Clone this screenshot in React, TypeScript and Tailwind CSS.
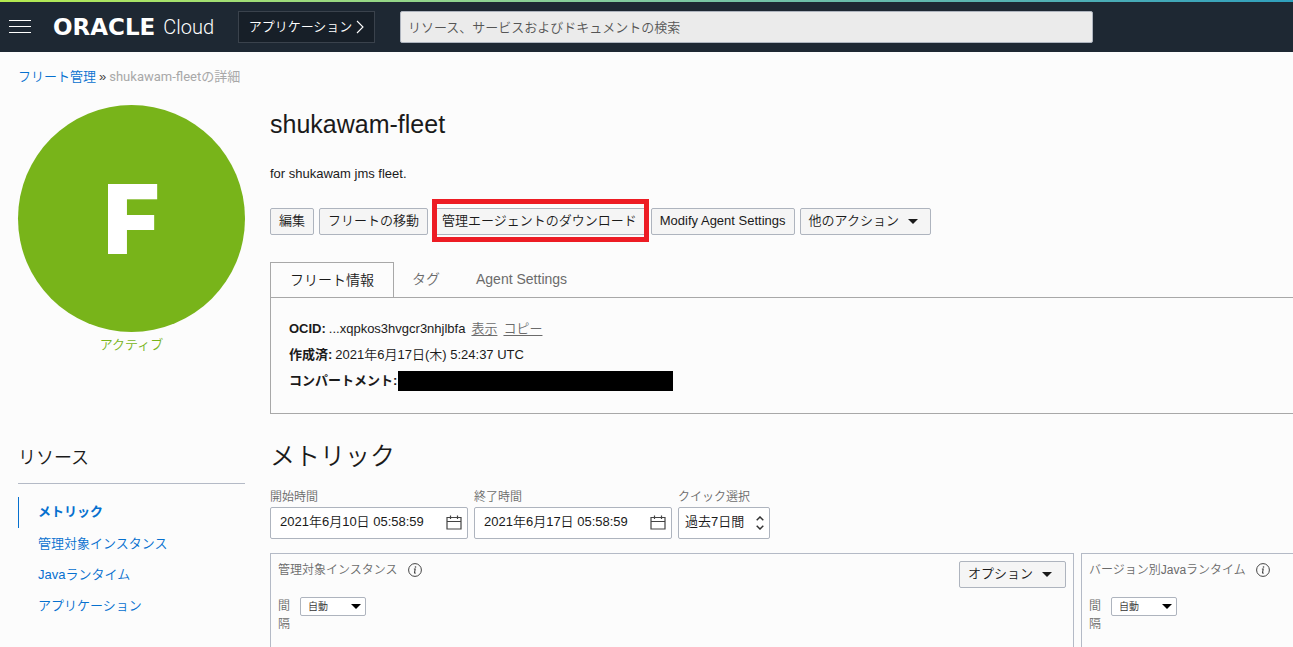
import type { ReactNode } from "react";

function Caret({ className = "" }: { className?: string }) {
  return (
    <svg viewBox="0 0 10 5" className={`h-[5px] w-[10px] ${className}`} aria-hidden="true">
      <path d="M0 0h10L5 5z" fill="currentColor" />
    </svg>
  );
}

function InfoIcon() {
  return (
    <svg viewBox="0 0 14 14" className="size-[14px] text-[#444]" fill="none" stroke="currentColor" aria-hidden="true">
      <circle cx="7" cy="7" r="6.400" strokeWidth="1" />
      <path d="M5.900 6h1.300L6.500 9.600q-.1.800 1.200.4" strokeWidth="1.100" />
      <circle cx="7.500" cy="4" r=".8" fill="currentColor" stroke="none" />
    </svg>
  );
}

function CalendarIcon() {
  return (
    <svg viewBox="0 0 16 15" className="mb-px h-[15px] w-4 text-[#444]" fill="none" stroke="currentColor" aria-hidden="true">
      <path d="M1 2.500h14v11.500H1zM1 6.500h14M4.500 .5v3.500M11.500 .5v3.500" strokeWidth="1.200" />
    </svg>
  );
}

function ActionButton({ children, className = "" }: { children: ReactNode; className?: string }) {
  return (
    <button
      type="button"
      className={`flex h-[27px] items-center whitespace-nowrap rounded-[2px] border border-[#aeb4be] bg-[#f5f5f5] px-2 pb-[2px] text-[13px] text-[#1a1a1a] ${className}`}
    >
      {children}
    </button>
  );
}

function DateField({ id, label, value }: { id: string; label: string; value: string }) {
  return (
    <div className="w-[198px]">
      <label htmlFor={id} className="block text-xs leading-5 text-[#6b6b6b]">
        {label}
      </label>
      <div className="flex h-8 items-center rounded-[2px] border border-[#aeb4be] bg-white pr-[5px]">
        <input id={id} defaultValue={value} className="min-w-0 flex-1 bg-transparent pb-[3px] pl-[9px] text-[13px] outline-none" />
        <CalendarIcon />
      </div>
    </div>
  );
}

function IntervalSelect({ id }: { id: string }) {
  return (
    <div className="mt-[17px] flex items-start gap-[9px]">
      <label htmlFor={id} className="w-[13px] text-xs leading-[18px] text-[#6b6b6b]">
        間隔
      </label>
      <div className="relative">
        <select id={id} className="block h-[19px] w-[66px] appearance-none rounded-[2px] border border-[#aeb4be] bg-white pl-[7px] text-[10px] text-[#333]">
          <option>自動</option>
        </select>
        <Caret className="pointer-events-none absolute right-[5px] top-[7px] text-black" />
      </div>
    </div>
  );
}

const resources = ["管理対象インスタンス", "Javaランタイム", "アプリケーション"];

export default function App() {
  return (
    <div className="flex min-h-screen flex-col overflow-x-hidden bg-[#fcfcfc] font-['Liberation_Sans','Noto_Sans_CJK_JP',sans-serif] text-[13px] font-[350] text-[#1a1a1a]">
      <div className="h-[2px] bg-linear-to-r from-[#b4ea4e] via-[#80c9a0] to-[#2fa0bd]" />
      <header className="flex h-[50px] items-center bg-[#1e2833] pl-[9px] text-white">
        <button type="button" aria-label="メニュー" className="mb-[2px] flex w-[22px] flex-col gap-[5px]">
          <span className="h-px bg-white" />
          <span className="h-px bg-white" />
          <span className="h-px bg-white" />
        </button>
        <a href="#" className="ml-[22px] flex w-[163px] items-center gap-2 whitespace-nowrap">
          <span className="font-['DejaVu_Sans',sans-serif] text-[23px] font-bold leading-7">ORACLE</span>
          <span className="font-[Roboto,sans-serif] text-[20px] font-light leading-7">Cloud</span>
        </a>
        <button type="button" className="ml-[22px] flex h-8 w-[137px] items-center justify-center gap-1 whitespace-nowrap border border-[#3a424c] bg-[#171f28] text-[13px]">
          アプリケーション
          <svg viewBox="0 0 8 14" className="h-[14px] w-2" fill="none" stroke="currentColor" aria-hidden="true">
            <path d="M1 1l6 6-6 6" strokeWidth="1.100" />
          </svg>
        </button>
        <input
          aria-label="検索"
          placeholder="リソース、サービスおよびドキュメントの検索"
          className="ml-[25px] mr-[200px] h-8 min-w-0 flex-1 rounded-[2px] border border-[#aeb4be] bg-[#ebebeb] px-[7px] text-[13px] placeholder:text-[#555]"
        />
      </header>

      <nav className="mt-[15px] flex h-5 items-center gap-[3px] pl-[18px]">
        <a href="#" className="text-[#0670cf]">フリート管理</a>
        <span className="text-[#444]">»</span>
        <span className="font-[Roboto,'Noto_Sans_CJK_JP',sans-serif] font-normal text-[#a8a8a8]">shukawam-fleetの詳細</span>
      </nav>

      <div className="flex flex-1 gap-[25px] pl-[18px] pt-[18px]">
        <aside className="w-[227px] shrink-0">
          <div className="flex aspect-square items-center justify-center rounded-full bg-[#78b41a] font-[Inter,sans-serif] text-[96px] font-black leading-none text-white">
            F
          </div>
          <p className="mt-[3px] text-center leading-5 text-[#78b41a]">アクティブ</p>
          <h2 className="mt-[89px] border-b border-[#b4bac6] pb-[11px] text-[18px] leading-7">リソース</h2>
          <ul className="mt-[13px] text-[#0670cf]">
            <li className="flex h-[31px] items-center border-l border-[#0670cf] pb-[2px] pl-[19px] font-bold">
              <a href="#">メトリック</a>
            </li>
            {resources.map((name) => (
              <li key={name} className="flex h-[31px] items-center pl-5">
                <a href="#">{name}</a>
              </li>
            ))}
          </ul>
        </aside>

        <main className="flex min-w-0 flex-1 flex-col">
          <h1 className="mt-[3px] text-[25px] leading-8">shukawam-fleet</h1>
          <p className="mt-[24px] leading-5">for shukawam jms fleet.</p>

          <div className="mt-[24px] flex gap-[5px]">
            <ActionButton>編集</ActionButton>
            <ActionButton>フリートの移動</ActionButton>
            <div className="relative">
              <ActionButton>管理エージェントのダウンロード</ActionButton>
              <span className="pointer-events-none absolute -bottom-[7px] -left-px -right-[3px] -top-[9px] border-[5px] border-[#ed1c24]" />
            </div>
            <ActionButton>Modify Agent Settings</ActionButton>
            <ActionButton className="gap-[9px] pr-3">
              他のアクション
              <Caret className="mt-[2px]" />
            </ActionButton>
          </div>

          <div role="tablist" className="mt-[27px] flex h-9 text-[14px] text-[#6b6b6b]">
            <button type="button" role="tab" aria-selected="true" className="w-[124px] border border-[#a8a8a8] text-[#1a1a1a]">
              フリート情報
            </button>
            <div className="flex flex-1 border-b border-[#a8a8a8]">
              <button type="button" role="tab" className="px-[18px]">タグ</button>
              <button type="button" role="tab" className="px-[18px]">Agent Settings</button>
            </div>
          </div>
          <section className="h-[116px] border-b border-l border-[#a8a8a8] pl-[18px] pt-[18px] leading-[26px]">
            <p className="flex">
              <span className="font-bold">OCID:</span>
              <span className="ml-[3px]">...xqpkos3hvgcr3nhjlbfa</span>
              <a href="#" className="ml-[6px] text-[#6b6b6b] underline underline-offset-2">表示</a>
              <a href="#" className="ml-[6px] text-[#6b6b6b] underline underline-offset-2">コピー</a>
            </p>
            <p className="flex">
              <span className="font-bold">作成済:</span>
              <span className="ml-[3px]">2021年6月17日(木) 5:24:37 UTC</span>
            </p>
            <p className="flex items-center">
              <span className="font-bold">コンパートメント:</span>
              <span className="ml-px h-5 w-[275px] bg-black" />
            </p>
          </section>

          <h2 className="mt-[24px] text-[25px] leading-9">メトリック</h2>
          <div className="mt-[13px] flex gap-[6px]">
            <DateField id="start" label="開始時間" value="2021年6月10日 05:58:59" />
            <DateField id="end" label="終了時間" value="2021年6月17日 05:58:59" />
            <div className="w-[92px]">
              <label htmlFor="quick" className="block whitespace-nowrap text-xs leading-5 text-[#6b6b6b]">クイック選択</label>
              <div className="relative">
                <select id="quick" className="h-8 w-full appearance-none rounded-[2px] border border-[#aeb4be] bg-white pb-[2px] pl-[6px] text-[13px]">
                  <option>過去7日間</option>
                </select>
                <svg viewBox="0 0 8 14" className="pointer-events-none absolute right-[6px] top-[9px] h-[14px] w-2 text-[#333]" fill="none" stroke="currentColor" aria-hidden="true">
                  <path d="M.7 4.200L4 1l3.300 3.200M.7 9.800L4 13l3.300-3.200" strokeWidth="1.500" />
                </svg>
              </div>
            </div>
          </div>

          <div className="mt-[14px] flex flex-1 gap-[7px]">
            <section className="min-w-0 flex-1 border border-b-0 border-[#b4bac6] px-[7px] pt-[6px]">
              <div className="flex h-5 items-start justify-between">
                <h3 className="flex items-center gap-[10px] text-xs leading-5 text-[#6b6b6b]">
                  管理対象インスタンス
                  <InfoIcon />
                </h3>
                <ActionButton className="mt-px gap-[9px] pr-[13px]">
                  オプション
                  <Caret className="mt-[2px]" />
                </ActionButton>
              </div>
              <IntervalSelect id="interval-instances" />
            </section>
            <section className="w-[212px] shrink-0 whitespace-nowrap border-l border-t border-[#b4bac6] pl-[7px] pt-[6px]">
              <h3 className="flex items-center gap-[10px] text-xs leading-5 text-[#6b6b6b]">
                バージョン別Javaランタイム
                <InfoIcon />
              </h3>
              <div className="whitespace-normal">
                <IntervalSelect id="interval-runtimes" />
              </div>
            </section>
          </div>
        </main>
      </div>
    </div>
  );
}
